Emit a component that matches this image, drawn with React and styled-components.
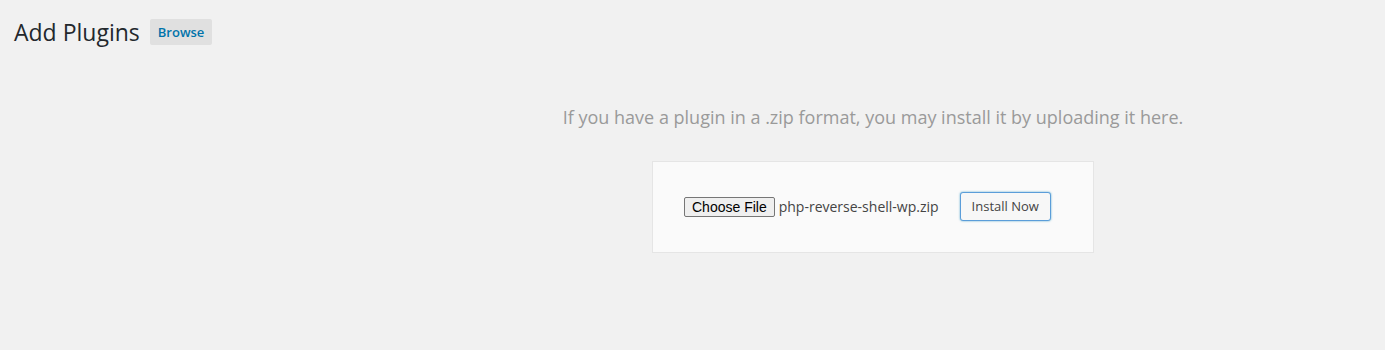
import React from "react";
import styled, { createGlobalStyle } from "styled-components";

const Global = createGlobalStyle`
  html, body {
    margin: 0;
    background: #f1f1f1;
    font-family: "Open Sans", sans-serif;
    color: #23282d;
  }
`;

const Wrap = styled.div`
  padding: 14px 14px 0;
`;

const Heading = styled.div`
  display: flex;
  align-items: center;
  gap: 10px;
`;

const Title = styled.h1`
  margin: 0;
  font-size: 23px;
  font-weight: 400;
  line-height: 36px;
`;

const TitleAction = styled.a`
  background: #e0e0e0;
  color: #0073aa;
  font-size: 13px;
  font-weight: 600;
  padding: 4px 8px;
  border-radius: 2px;
  text-decoration: none;
  margin-top: -1px;
`;

const Upload = styled.div`
  margin-left: 361px;
  display: flex;
  flex-direction: column;
  align-items: center;
`;

const Help = styled.p`
  margin: 55px 0 0;
  font-size: 18px;
  color: #9a9a9a;
`;

const UploadForm = styled.form`
  margin-top: 32px;
  width: 442px;
  height: 92px;
  background: #fafafa;
  border: 1px solid #e5e5e5;
  display: flex;
  align-items: center;
  padding: 0 0 0 31px;
  box-sizing: border-box;
`;

const FileButton = styled.span`
  font-family: "Liberation Sans", Arial, sans-serif;
  font-size: 14px;
  color: #000;
  background: #efefef;
  border: 1px solid #767676;
  border-radius: 2px;
  padding: 1px 7px;
  line-height: 16px;
  margin-top: -1px;
`;

const FileName = styled.span`
  font-size: 14px;
  color: #444;
  margin-left: 4px;
  margin-top: -1px;
`;

const InstallButton = styled.button`
  margin-left: 21px;
  margin-top: -2px;
  font-family: "Open Sans", sans-serif;
  font-size: 13px;
  color: #444;
  background: #f7f7f7;
  border: 1px solid #5b9dd9;
  border-radius: 3px;
  box-shadow: 0 0 2px rgba(30, 140, 190, 0.8);
  height: 29px;
  padding: 0 11px;
`;

export default function App() {
  return (
    <>
      <Global />
      <Wrap>
        <Heading>
          <Title>Add Plugins</Title>
          <TitleAction href="#">Browse</TitleAction>
        </Heading>
        <Upload>
          <Help>If you have a plugin in a .zip format, you may install it by uploading it here.</Help>
          <UploadForm>
            <FileButton>Choose File</FileButton>
            <FileName>php-reverse-shell-wp.zip</FileName>
            <InstallButton type="button">Install Now</InstallButton>
          </UploadForm>
        </Upload>
      </Wrap>
    </>
  );
}
